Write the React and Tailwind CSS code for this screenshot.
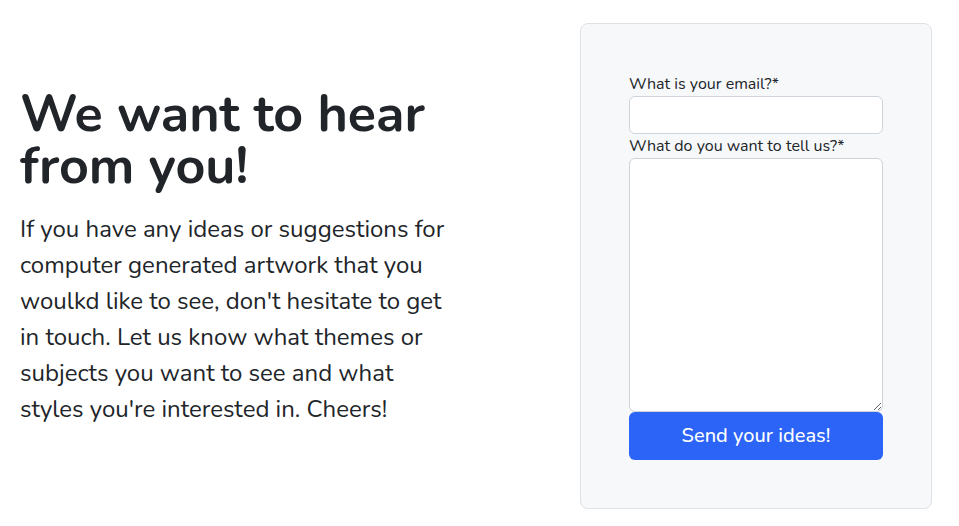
export default function App() {
  return (
    <div className="min-h-[526px] bg-white text-[#212529] font-['Nunito','Lato',sans-serif]">
      <div className="flex items-start pl-[20px] pr-[27px] pt-[23px] pb-[18px]">

        {/* Intro */}
        <div className="w-[436px] mt-[65px]">
          <h1 className="text-[52px] font-bold leading-[52px]">
            We want to hear from you!
          </h1>
          <p className="mt-[19px] text-[24px] leading-[36px]">
            If you have any ideas or suggestions for computer generated artwork that you woulkd like to see, don't hesitate to get in touch. Let us know what themes or subjects you want to see and what styles you're interested in. Cheers!
          </p>
        </div>

        {/* Form card */}
        <div className="ml-auto w-[352px] h-[486px] rounded-lg border border-[#dee2e6] bg-[#f7f8fa] px-[48px] pt-[48px]">
          <form className="flex flex-col">
            <label className="text-[16px] leading-[24px]">What is your email?*</label>
            <input
              type="email"
              className="h-[38px] rounded-md border border-[#ced4da] bg-white px-3"
            />
            <label className="text-[16px] leading-[24px]">What do you want to tell us?*</label>
            <textarea className="h-[254px] rounded-md border border-[#ced4da] bg-white px-3 py-2" />
            <button
              type="button"
              className="h-[48px] rounded-md bg-[#2b64f6] text-[20px] font-medium text-white"
            >
              Send your ideas!
            </button>
          </form>
        </div>
      </div>
    </div>
  )
}
